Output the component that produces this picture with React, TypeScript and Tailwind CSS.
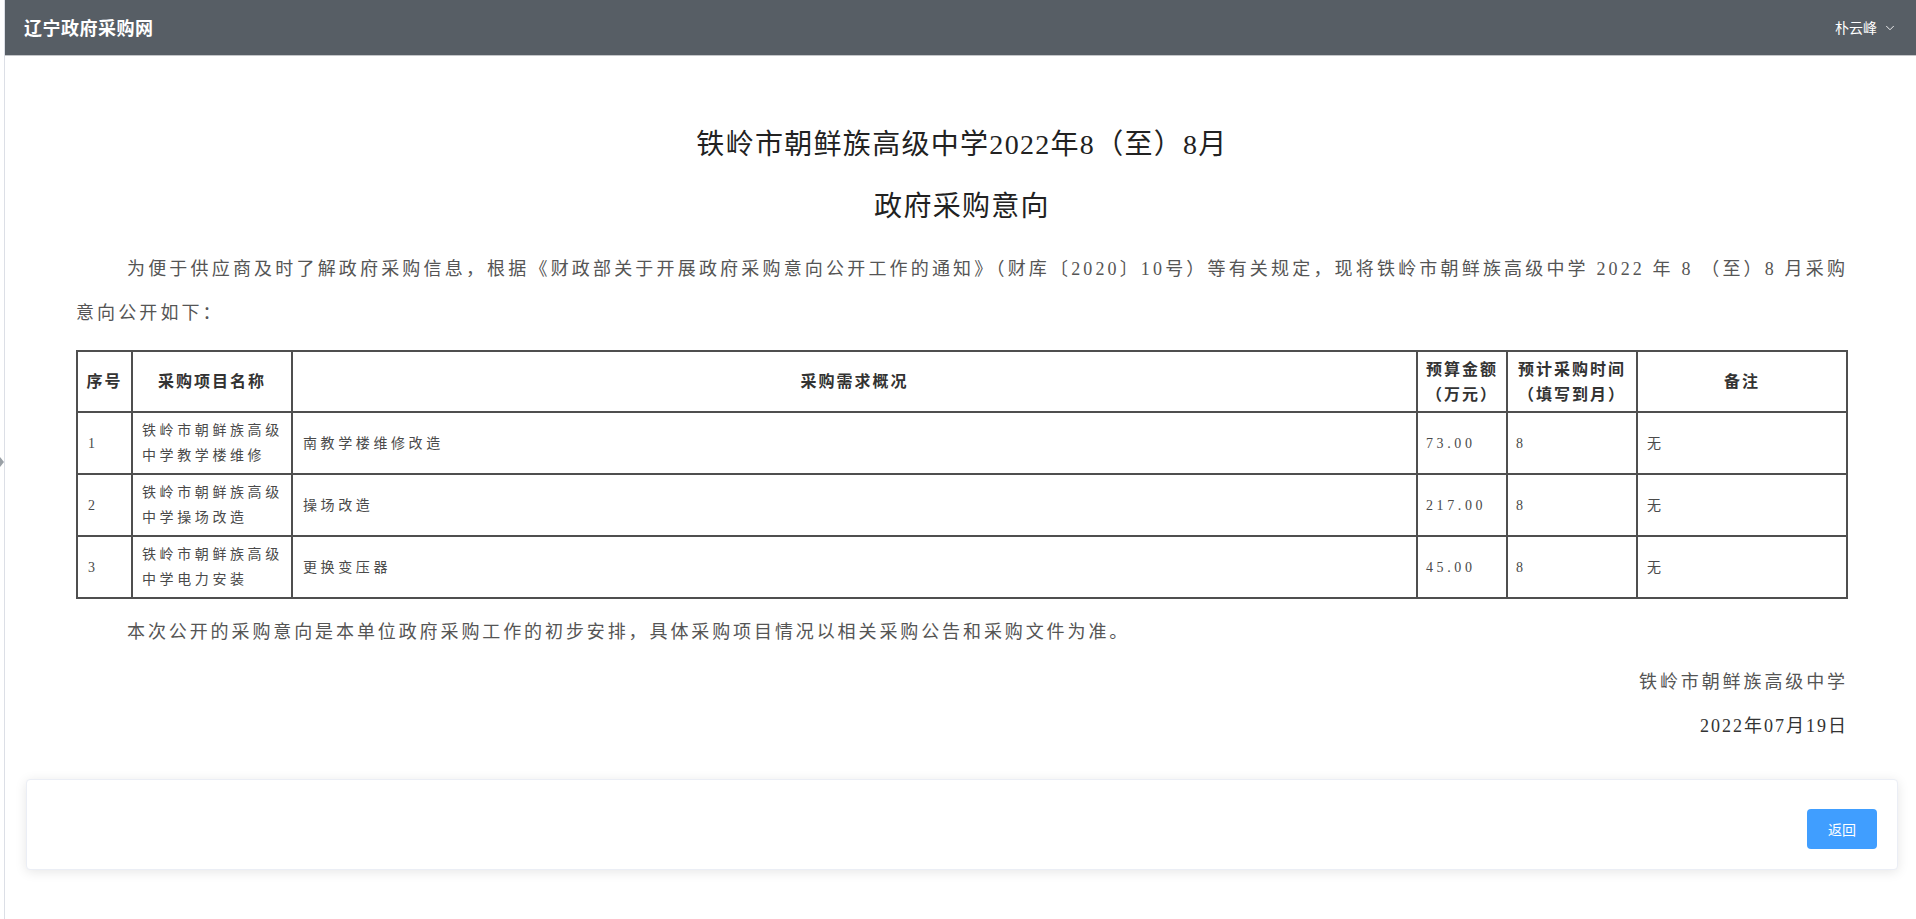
import { ChevronDown } from 'lucide-react';

const serif = { fontFamily: '"Liberation Serif", "Noto Sans CJK SC", serif' };

const rows = [
  { no: '1', name: '铁岭市朝鲜族高级中学教学楼维修', desc: '南教学楼维修改造', budget: '73.00', month: '8', note: '无' },
  { no: '2', name: '铁岭市朝鲜族高级中学操场改造', desc: '操场改造', budget: '217.00', month: '8', note: '无' },
  { no: '3', name: '铁岭市朝鲜族高级中学电力安装', desc: '更换变压器', budget: '45.00', month: '8', note: '无' },
];

const App = () => {
  return (
    <div className="relative min-h-screen bg-white pl-[4px]" style={{ fontFamily: '"Noto Sans CJK SC", sans-serif' }}>
      <div className="absolute left-0 top-[457px] h-0 w-0 border-y-[5px] border-l-[4px] border-y-transparent border-l-[#9aa0a6]" />
      <div className="min-h-screen border-l border-[#dcdfe6]">
        <div className="flex h-[56px] items-center justify-between border-b border-[#c4c6c9] bg-[#575e65] pl-[19px] pr-[19px] text-white">
          <p className="text-[18px] font-bold tracking-[0.5px]">辽宁政府采购网</p>
          <div className="flex items-center gap-[6px] text-[14px]">
            <span>朴云峰</span>
            <ChevronDown size={14} strokeWidth={1.5} />
          </div>
        </div>

        <div className="pl-[21px] pr-[18px] pb-10">
          <div className="px-[50px] text-[#555]" style={serif}>
            <p className="mt-[69px] text-center text-[28px] leading-[40px] tracking-[1.3px] text-[#222]">铁岭市朝鲜族高级中学2022年8（至）8月</p>
            <p className="mt-[22px] text-center text-[28px] leading-[40px] tracking-[1.3px] text-[#222]">政府采购意向</p>

            <div className="mt-[20px] text-[18px] leading-[44px] tracking-[3.1px]">
              <p className="indent-[51px] text-justify [text-align-last:justify]">
                为便于供应商及时了解政府采购信息，根据《财政部关于开展政府采购意向公开工作的通知》（财库〔2020〕10号）等有关规定，现将铁岭市朝鲜族高级中学 2022 年 8 （至）8 月采购
              </p>
              <p>意向公开如下：</p>
            </div>

            <table className="mt-[15px] w-full table-fixed border-collapse border-2 border-[#4f4f4f]">
              <colgroup>
                <col className="w-[55px]" />
                <col className="w-[160px]" />
                <col />
                <col className="w-[90px]" />
                <col className="w-[130px]" />
                <col className="w-[210px]" />
              </colgroup>
              <thead>
                <tr className="h-[61px] text-[16px] font-bold leading-[25px] tracking-[2px] text-[#333]">
                  <th className="border-2 border-[#4f4f4f] px-1 text-center">序号</th>
                  <th className="border-2 border-[#4f4f4f] px-1 text-center">采购项目名称</th>
                  <th className="border-2 border-[#4f4f4f] px-1 text-center">采购需求概况</th>
                  <th className="border-2 border-[#4f4f4f] px-0 text-center">
                    预算金额
                    <br />
                    （万元）
                  </th>
                  <th className="border-2 border-[#4f4f4f] px-1 text-center">
                    预计采购时间
                    <br />
                    （填写到月）
                  </th>
                  <th className="border-2 border-[#4f4f4f] px-1 text-center">备注</th>
                </tr>
              </thead>
              <tbody>
                {rows.map((row) => (
                  <tr key={row.no} className="h-[62px] text-[14px] leading-[25px] tracking-[3.6px] text-[#4a4a4a]">
                    <td className="border-2 border-[#4f4f4f] pl-[10px] pr-1 align-middle">{row.no}</td>
                    <td className="border-2 border-[#4f4f4f] pl-[9px] pr-[4px] align-middle">{row.name}</td>
                    <td className="border-2 border-[#4f4f4f] pl-[10px] align-middle">{row.desc}</td>
                    <td className="border-2 border-[#4f4f4f] pl-[8px] align-middle">{row.budget}</td>
                    <td className="border-2 border-[#4f4f4f] pl-[8px] align-middle">{row.month}</td>
                    <td className="border-2 border-[#4f4f4f] pl-[9px] align-middle">{row.note}</td>
                  </tr>
                ))}
              </tbody>
            </table>

            <p className="mt-[11px] indent-[51px] text-[18px] leading-[44px] tracking-[2.9px]">
              本次公开的采购意向是本单位政府采购工作的初步安排，具体采购项目情况以相关采购公告和采购文件为准。
            </p>
            <p className="mt-[6px] text-right text-[18px] leading-[44px] tracking-[2.9px]">铁岭市朝鲜族高级中学</p>
            <p className="text-right text-[18px] leading-[44px] tracking-[2px] text-[#333]">2022年07月19日</p>
          </div>

          <div className="mt-[31px] flex h-[91px] items-end justify-end rounded-[4px] border border-[#ebeef5] bg-white p-5 shadow-[0_2px_12px_0_rgba(0,0,0,0.1)]">
            <button className="h-[40px] w-[70px] rounded-[4px] bg-[#409eff] text-[14px] text-white">返回</button>
          </div>
        </div>
      </div>
    </div>
  );
};

export default App;
